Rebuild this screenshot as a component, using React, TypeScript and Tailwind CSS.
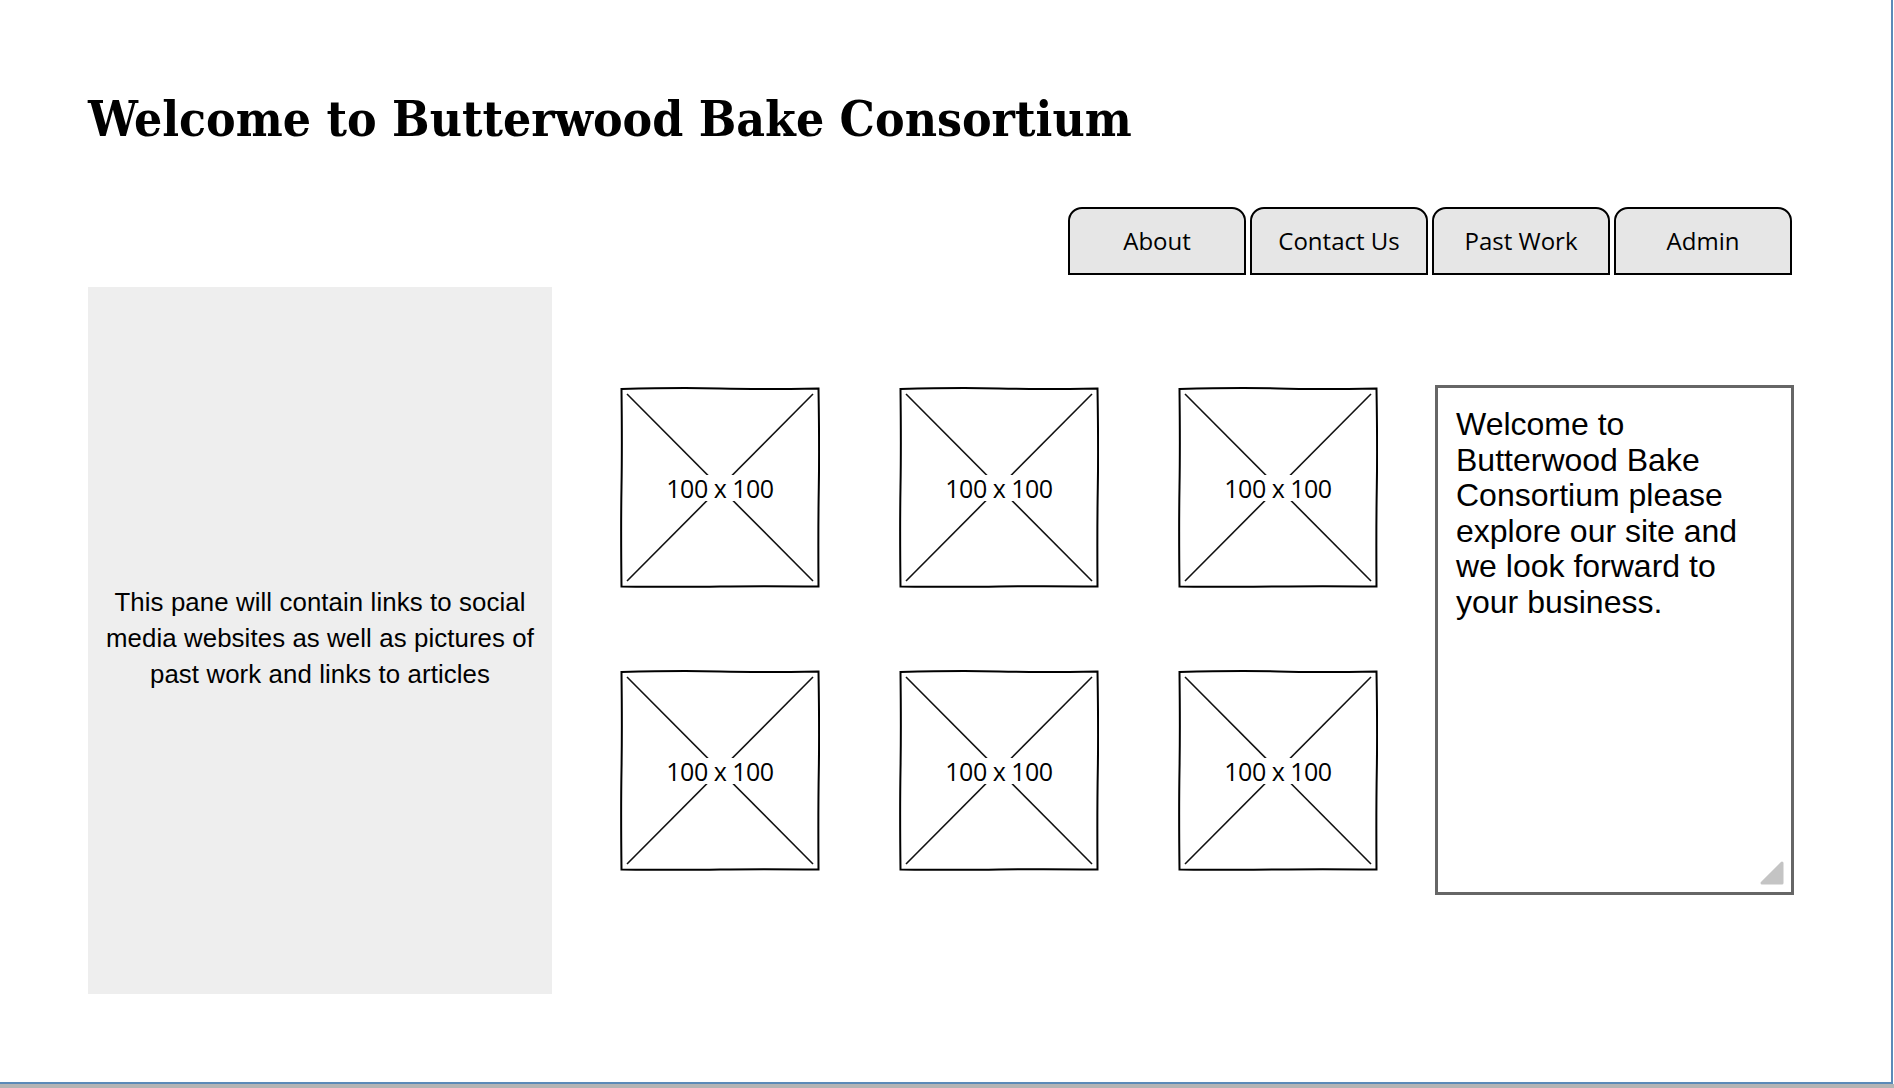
import React from 'react';

const tabs = ['About', 'Contact Us', 'Past Work', 'Admin'];

const Placeholder: React.FC = () => {
    return (
        <div className="relative w-[200px] h-[201px]">
            <svg className="absolute inset-0" width="200" height="201" viewBox="0 0 200 201" fill="none">
                {/* hand-drawn frame */}
                <path
                    d="M1.5 2 Q60 0.5 100 1.5 T198.5 1.5 Q199.5 60 198.8 100 T198.5 199.5 Q140 198.8 100 199.5 T1.5 199.5 Q0.8 140 1.5 100 T1.5 2 Z"
                    stroke="#000"
                    strokeWidth="2"
                />
                <path d="M7 7 L193 194" stroke="#111" strokeWidth="1.6" />
                <path d="M193 7 L7 194" stroke="#111" strokeWidth="1.6" />
            </svg>
            <div className="absolute inset-0 flex items-center justify-center">
                <span className="bg-white px-[3px] text-[25px] leading-[26px] text-black font-['Comic_Sans_MS','Open_Sans',sans-serif] tracking-[-0.5px]">
                    100 x 100
                </span>
            </div>
        </div>
    );
};

export default function App() {
    return (
        <div className="w-[1894px] h-[1088px] bg-white overflow-hidden flex flex-col">
            <div className="h-[1084px] w-[1893px] border-r-2 border-b-2 border-[#5b8ab8] flex flex-col">
                {/* Title */}
                <h1 className="mt-[94px] ml-[88px] h-[50px] text-[49.4px] leading-[50px] font-bold font-stretch-condensed text-black font-['DejaVu_Serif','Liberation_Serif',serif]">
                    Welcome to Butterwood Bake Consortium
                </h1>

                {/* Tabs */}
                <div className="mt-[63px] flex justify-end gap-[4px] pr-[99px]">
                    {tabs.map((t) => (
                        <div
                            key={t}
                            className="w-[178px] h-[68px] bg-[#e6e6e6] border-2 border-black rounded-t-[14px] flex items-center justify-center text-[24px] text-black font-['Comic_Sans_MS','Open_Sans',sans-serif]"
                        >
                            {t}
                        </div>
                    ))}
                </div>

                <div className="mt-[12px] flex items-start">
                    {/* Side pane */}
                    <div className="ml-[88px] w-[464px] h-[707px] bg-[#eeeeee] flex items-center justify-center text-center pb-[5px]">
                        <p className="text-[25.8px] leading-[36px] text-black font-['Liberation_Sans',Arial,sans-serif] tracking-[0.1px]">
                            This pane will contain links to social
                            <br />
                            media websites as well as pictures of
                            <br />
                            past work and links to articles
                        </p>
                    </div>

                    {/* Image grid */}
                    <div className="ml-[68px] mt-[100px] grid grid-cols-[200px_200px_200px] gap-x-[79px] gap-y-[82px]">
                        <Placeholder />
                        <Placeholder />
                        <Placeholder />
                        <Placeholder />
                        <Placeholder />
                        <Placeholder />
                    </div>

                    {/* Welcome text box */}
                    <div className="relative ml-[57px] mt-[98px] w-[359px] h-[510px] border-[3px] border-[#666666] bg-white pl-[18px] pt-[19px]">
                        <p className="text-[32px] leading-[35.6px] text-black font-['Liberation_Sans',Arial,sans-serif]">
                            Welcome to
                            <br />
                            Butterwood Bake
                            <br />
                            Consortium please
                            <br />
                            explore our site and
                            <br />
                            we look forward to
                            <br />
                            your business.
                        </p>
                        <svg className="absolute right-[7px] bottom-[7px]" width="24" height="24" viewBox="0 0 24 24">
                            <polygon points="22,2 22,22 2,22" fill="#c4c4c4" stroke="#c4c4c4" strokeWidth="3" strokeLinejoin="round" />
                        </svg>
                    </div>
                </div>
            </div>
            <div className="h-[4px] bg-[#b4b4b4]" />
        </div>
    );
}
